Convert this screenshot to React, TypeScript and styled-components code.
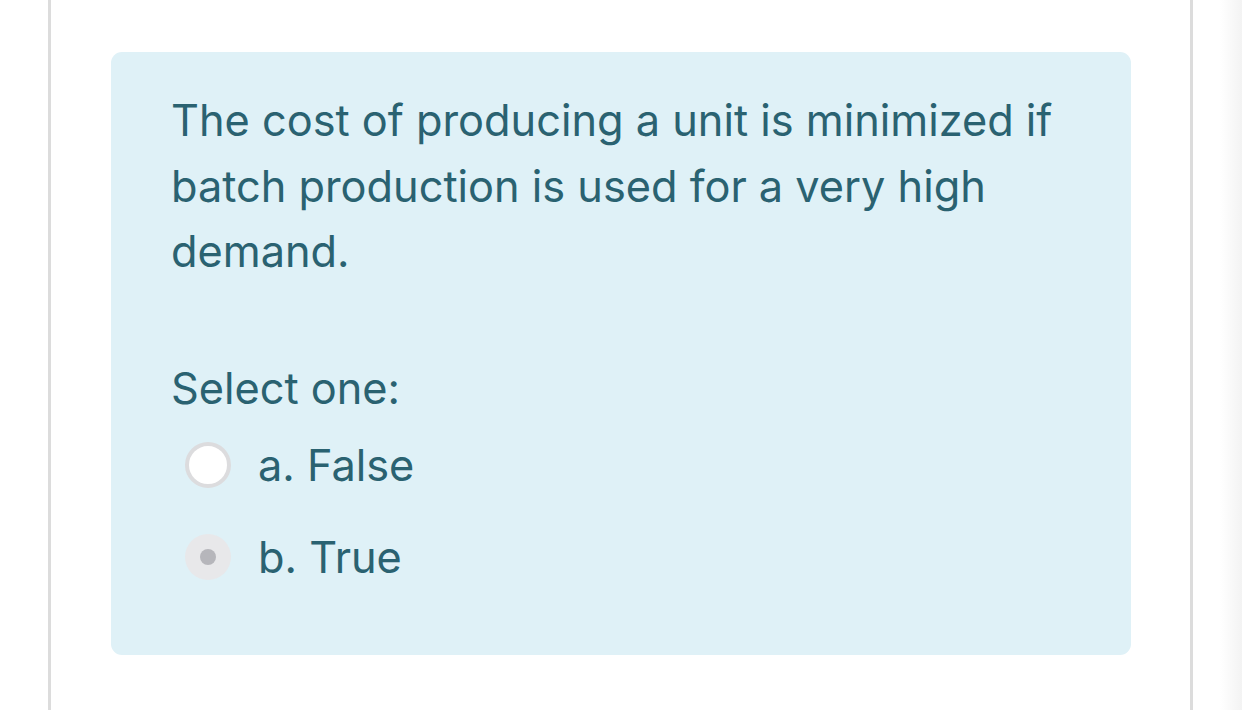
import React from "react";
import styled, { createGlobalStyle } from "styled-components";

const Global = createGlobalStyle`
  html, body { margin: 0; padding: 0; background: #ffffff; }
  body { font-family: Inter, "Liberation Sans", Arial, sans-serif; }
  * { box-sizing: border-box; }
`;

const Page = styled.div`
  width: 1242px;
  height: 710px;
  display: flex;
  overflow: hidden;
  background: #fff;
`;

const Gutter = styled.div<{ $w: number }>`
  width: ${(p) => p.$w}px;
  flex: none;
`;

const RightEdge = styled.div`
  flex: 1;
  background: linear-gradient(to right, #ffffff 0%, #ffffff 55%, #f3f3f3 100%);
`;

const Main = styled.div`
  width: 1145px;
  flex: none;
  border-left: 3px solid #dcdcdc;
  border-right: 3px solid #dcdcdc;
  padding: 52px 59px 0 60px;
`;

const Card = styled.div`
  background: #dff1f7;
  border-radius: 11px;
  height: 603px;
  padding: 36px 62px 0 60px;
  color: #2a6271;
  font-size: 43.3px;
`;

const Question = styled.p`
  margin: 0;
  line-height: 65.5px;
`;

const Prompt = styled.div`
  margin-top: 70px;
  line-height: 66px;
`;

const Options = styled.div`
  display: flex;
  flex-direction: column;
  gap: 26px;
  margin-top: 11px;
  padding-left: 14px;
`;

const Option = styled.label`
  display: flex;
  align-items: center;
  gap: 27px;
  line-height: 66px;
`;

const Radio = styled.span<{ $checked?: boolean }>`
  width: 46px;
  height: 46px;
  border-radius: 50%;
  flex: none;
  display: flex;
  align-items: center;
  justify-content: center;
  background: ${(p) => (p.$checked ? "#e8e8ea" : "#ffffff")};
  border: ${(p) => (p.$checked ? "none" : "4px solid #dcdcde")};
`;

const Dot = styled.span`
  width: 16px;
  height: 16px;
  border-radius: 50%;
  background: #b6b6bb;
`;

export default function App() {
  return (
    <>
      <Global />
      <Page>
        <Gutter $w={48} />
        <Main>
          <Card>
            <Question>
              The cost of producing a unit is minimized if batch production is
              used for a very high demand.
            </Question>
            <Prompt>Select one:</Prompt>
            <Options>
              <Option>
                <Radio />
                a. False
              </Option>
              <Option>
                <Radio $checked>
                  <Dot />
                </Radio>
                b. True
              </Option>
            </Options>
          </Card>
        </Main>
        <RightEdge />
      </Page>
    </>
  );
}
